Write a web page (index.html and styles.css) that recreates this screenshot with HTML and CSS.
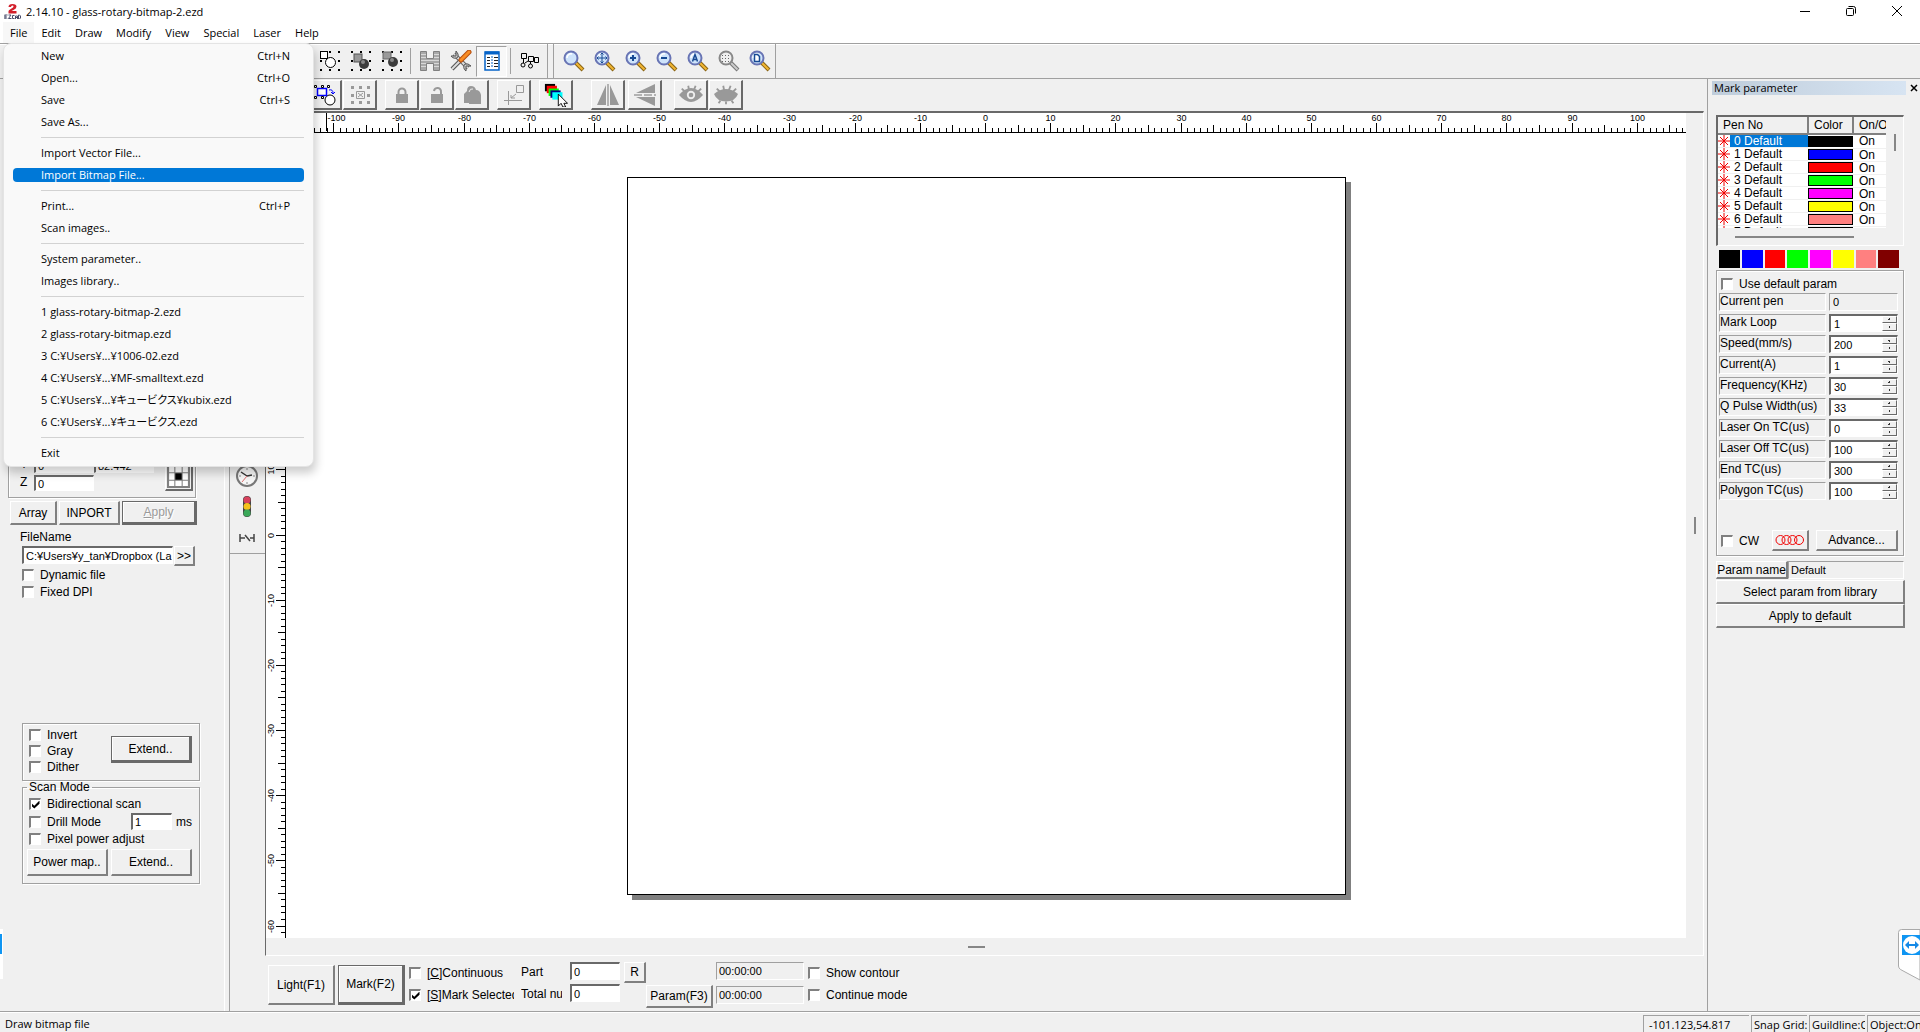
FILE: index.html
```html
<!DOCTYPE html>
<html lang="en">
<head>
<meta charset="utf-8">
<title>2.14.10 - glass-rotary-bitmap-2.ezd</title>
<link rel="stylesheet" href="styles.css">
</head>
<body>
<svg class="defs" aria-hidden="true">
  <symbol id="lens" viewBox="0 0 22 22">
    <path d="M12 12l8 8" stroke="#8a6414" stroke-width="4"/>
    <path d="M13 13l6.5 6.500" stroke="#f2b632" stroke-width="2"/>
    <circle cx="8" cy="8" r="6.500" fill="#cfe4fb" stroke="#6874b4" stroke-width="2"/>
    <path d="M4 8a4 4 0 0 1 5-4" stroke="#fff" stroke-width="1.500" fill="none"/>
  </symbol>
  <symbol id="dots" viewBox="0 0 22 22">
    <path d="M1 1h2v2h-2zM10 1h2v2h-2zM19 1h2v2h-2zM1 10h2v2h-2zM19 10h2v2h-2zM1 19h2v2h-2zM10 19h2v2h-2zM19 19h2v2h-2z"/>
  </symbol>
  <symbol id="star" viewBox="0 0 12 12">
    <path d="M6 0v12M0 6h12M2 2l8 8M10 2l-8 8" stroke="#f00000" fill="none"/>
  </symbol>
</svg>

<header class="titlebar">
  <svg class="logo" viewBox="0 0 16 16"><path d="M4 4q0-3 4-3t4 2.500q0 2-3 3.500l-2 1h5v2.500H4V8q0-1 3-2.500 2-1 2-2 0-1-1-1-1.500 0-1.500 1.500z" fill="#d3202c"/><path d="M0 12h3M0 14h2.500M0 16h3M0.500 12v4M4 12h2.500l-2.500 3.500h3M10 12.500H8v3h2M11 16v-3h2v3M11 14.500h2M14 12v4h1l1-1v-2l-1-1z" fill="none" stroke="#4a4e6c"/></svg>
  <h1>2.14.10 - glass-rotary-bitmap-2.ezd</h1>
  <div class="winbuttons">
    <button aria-label="Minimize"><svg viewBox="0 0 12 12"><path d="M1 6.500h10"/></svg></button>
    <button aria-label="Restore"><svg viewBox="0 0 12 12"><rect x="1.500" y="3.500" width="7" height="7" rx="1"/><path d="M3.500 1.500h5q2 0 2 2v5"/></svg></button>
    <button aria-label="Close"><svg viewBox="0 0 12 12"><path d="M1 1l10 10M11 1l-10 10"/></svg></button>
  </div>
</header>

<nav class="menubar">
  <button class="open">File</button><button>Edit</button><button>Draw</button><button>Modify</button><button>View</button><button>Special</button><button>Laser</button><button>Help</button>
  <div class="menu">
    <button><span>New</span><kbd>Ctrl+N</kbd></button>
    <button><span>Open...</span><kbd>Ctrl+O</kbd></button>
    <button><span>Save</span><kbd>Ctrl+S</kbd></button>
    <button><span>Save As...</span></button>
    <hr>
    <button><span>Import Vector File...</span></button>
    <button class="current"><span>Import Bitmap File...</span></button>
    <hr>
    <button><span>Print...</span><kbd>Ctrl+P</kbd></button>
    <button><span>Scan images..</span></button>
    <hr>
    <button><span>System parameter..</span></button>
    <button><span>Images library..</span></button>
    <hr>
    <button><span>1 glass-rotary-bitmap-2.ezd</span></button>
    <button><span>2 glass-rotary-bitmap.ezd</span></button>
    <button><span>3 C:¥Users¥...¥1006-02.ezd</span></button>
    <button><span>4 C:¥Users¥...¥MF-smalltext.ezd</span></button>
    <button><span>5 C:¥Users¥...¥キュービクス¥kubix.ezd</span></button>
    <button><span>6 C:¥Users¥...¥キュービクス.ezd</span></button>
    <hr>
    <button><span>Exit</span></button>
  </div>
</nav>

<div class="toolbar">
  <div class="band">
    <button aria-label="Combine"><svg viewBox="0 0 22 22"><use href="#dots"/><rect x="1.500" y="1.500" width="7" height="7" fill="#fff" stroke="#000"/><circle cx="11.500" cy="12.500" r="5" fill="#fff" stroke="#000"/></svg></button>
    <button aria-label="Group"><svg viewBox="0 0 22 22"><use href="#dots"/><rect x="4" y="4" width="8" height="8" fill="#999" stroke="#555"/><circle cx="14" cy="14" r="5" fill="#3c3c3c"/><circle cx="13" cy="12" r="2" fill="#888"/></svg></button>
    <button aria-label="Ungroup"><svg viewBox="0 0 22 22"><use href="#dots"/><rect x="2" y="2" width="8" height="7" fill="#999" stroke="#666"/><circle cx="12" cy="12" r="5" fill="#3c3c3c"/><circle cx="11" cy="10" r="2" fill="#888"/></svg></button>
    <i class="sep"></i>
    <button aria-label="Hatch"><svg viewBox="0 0 22 22"><path d="M1.500 1.500h6v7h7v-7h6v19h-6v-7h-7v7h-6z" fill="#a8a8a8" stroke="#808080"/><path d="M2 4.500h5M2 7.500h5M2 10.500h18M2 13.500h5M2 16.500h5M15 4.500h5M15 7.500h5M15 13.500h5M15 16.500h5" stroke="#d8d8d8"/></svg></button>
    <button aria-label="System settings"><svg viewBox="0 0 22 22"><path d="M4 4L18 18" stroke="#666" stroke-width="4"/><path d="M4 4L18 18" stroke="#ddd" stroke-width="2"/><path d="M6 1v5h-5a4.500 4.500 0 0 0 7 1q1-3-2-6zM21 16h-5v5a4.500 4.500 0 0 1-1-7q3-1 6 2z" fill="#ccc" stroke="#555"/><path d="M2 19l8-8" stroke="#555" stroke-width="4"/><path d="M2 19l8-8" stroke="#ddd" stroke-width="2"/><path d="M11 10l8-8" stroke="#b54d0e" stroke-width="5" stroke-linecap="round"/><path d="M11 10l8-8" stroke="#f98d24" stroke-width="3" stroke-linecap="round"/></svg></button>
    <button class="pressed" aria-label="Object list"><svg viewBox="0 0 22 22"><rect x="4" y="2" width="14" height="18" fill="#fff" stroke="#0563c8" stroke-width="1.500"/><path d="M4 3h14" stroke="#0563c8" stroke-width="3"/><path d="M6 7.500h3M6 10.500h3M6 13.500h3M6 16.500h3M13 7.500h4M13 10.500h4M13 13.500h4M13 16.500h4" stroke="#222"/><path d="M11 6v12" stroke="#0563c8" stroke-dasharray="2 1"/></svg></button>
    <i class="sep"></i>
    <button aria-label="Node edit"><svg viewBox="0 0 22 22" fill="none" stroke="#000"><path d="M2.500 3.500h5v5h-5zM9.500 6.500h5v5h-5zM15.500 7.500h4v5h-4zM4.500 9v4M11.500 12v2"/><circle cx="4" cy="15" r="2"/><circle cx="11.500" cy="16" r="2"/><path d="M6 13l3-2"/></svg></button>
  </div>
  <div class="band zooms">
    <button aria-label="Zoom window"><svg viewBox="0 0 22 22"><use href="#lens"/></svg></button>
    <button aria-label="Pan"><svg viewBox="0 0 22 22"><use href="#lens"/><path d="M8 3v10M3 8h10M6.500 4.500l1.500-1.500 1.500 1.500M6.500 11.500l1.500 1.500 1.500-1.500M4.500 6.500l-1.500 1.500 1.500 1.500M11.500 6.500l1.500 1.500-1.500 1.500" stroke="#174a94" fill="none"/></svg></button>
    <button aria-label="Zoom in"><svg viewBox="0 0 22 22"><use href="#lens"/><path d="M8 5v6M5 8h6" stroke="#174a94" stroke-width="2"/></svg></button>
    <button aria-label="Zoom out"><svg viewBox="0 0 22 22"><use href="#lens"/><path d="M5 8h6" stroke="#174a94" stroke-width="2"/></svg></button>
    <button aria-label="Zoom all"><svg viewBox="0 0 22 22"><use href="#lens"/><path d="M5.500 11.500l2.500-7 2.500 7M6 9.500h4" stroke="#174a94" stroke-width="1.500" fill="none"/></svg></button>
    <button aria-label="Zoom selected"><svg viewBox="0 0 22 22"><path d="M12 12l8 8" stroke="#777" stroke-width="4"/><path d="M13 13l6.500 6.500" stroke="#ccc" stroke-width="2"/><circle cx="8" cy="8" r="6.500" fill="#eee" stroke="#888" stroke-width="2"/><path d="M4 5.500h9M4 8.500h9M4 11.500h9" stroke="#666" stroke-dasharray="1 2"/></svg></button>
    <button aria-label="Zoom page"><svg viewBox="0 0 22 22"><use href="#lens"/><path d="M5.500 4.500h3l2 2v5h-5z" fill="#fff" stroke="#174a94" stroke-width="1.500"/></svg></button>
  </div>
</div>

<main class="work">
  <div class="left-side">
    <div class="toolbar2">
      <button aria-label="Select"><svg viewBox="0 0 24 24"><circle cx="17" cy="17" r="5" fill="#fff" stroke="#000"/><path d="M4.500 5.500h9v7h-9z" fill="#fff" stroke="#00f" stroke-width="1.500"/><path d="M16 7q4-1 4 3M18 9l2 2 2-2" stroke="#00f" fill="none"/><path d="M1.500 2.500h2v2h-2zM8.500 2.500h2v2h-2zM14.500 2.500h2v2h-2zM1.500 13.500h2v2h-2zM8.500 13.500h2v2h-2z" fill="#fff" stroke="#000"/></svg></button>
      <button aria-label="Node" class="gap"><svg viewBox="0 0 24 24"><path d="M3 3h3v3h-3zM11 3h3v3h-3zM19 3h3v3h-3zM3 11h3v3h-3zM19 11h3v3h-3zM3 18h3v3h-3zM11 18h3v3h-3zM19 18h3v3h-3z" fill="#999"/><path d="M8.500 8.500h8v7h-8zM10 10l5 4M15 10l-5 4" stroke="#999" fill="none"/></svg></button>
      <button aria-label="Lock"><svg viewBox="0 0 24 24"><path d="M6 11h12v9h-12z" fill="#999"/><path d="M8.500 12v-3a3.500 3.500 0 0 1 7 0v3" fill="none" stroke="#999" stroke-width="2"/></svg></button>
      <button aria-label="Unlock"><svg viewBox="0 0 24 24"><path d="M6 11h12v9h-12z" fill="#999"/><path d="M9 8a3.500 3.500 0 0 1 7 1v3" fill="none" stroke="#999" stroke-width="2"/></svg></button>
      <button aria-label="Unlock all" class="gap"><svg viewBox="0 0 24 24"><path d="M4 20V11l3-3q0-5 4-5 4 0 5 4 4 0 5 5v9h-12v-1z" fill="#999"/><path d="M9 9q1-4 4-3" stroke="#f0f0f0" fill="none"/></svg></button>
      <button aria-label="Origin" class="gap"><svg viewBox="0 0 24 24"><path d="M14.500 2.500h7v7h-7zM6.500 8v14M2 17.500h18M14 11l-5 4M9 12v3h4" stroke="#999" fill="none"/></svg></button>
      <button aria-label="Layers" class="gap2"><svg viewBox="0 0 26 26"><path d="M1 1h11v8H1z"/><path d="M3 3h11v8H3z" fill="red"/><path d="M5 6h11v8H5z" fill="#0f0"/><path d="M7 8h11v8H7z" fill="#000080"/><path d="M9 10h11v8H9z" fill="#0ff"/><path d="M15.500 12v13l3-3 2 4h3l-2-4h4z" fill="#fff" stroke="#000"/></svg></button>
      <button aria-label="Mirror horizontal" class="gap1"><svg viewBox="0 0 24 24"><path d="M10 2v20H1zM14 2v20h9z" fill="#999"/><path d="M12 1v22" stroke="#777"/></svg></button>
      <button aria-label="Mirror vertical" class="gap3"><svg viewBox="0 0 24 24"><path d="M3 10L22 1v9zM3 14L22 23v-9z" fill="#999"/><path d="M1 12h22" stroke="#777" stroke-dasharray="8 2"/></svg></button>
      <button aria-label="Show"><svg viewBox="0 0 26 24"><path d="M0 12q13-15 26 0-13 15-26 0z" fill="#999"/><path d="M3 5l4 4M10 2l1 5M18 2l-2 5M24 5l-4 4" stroke="#999" stroke-width="2"/><circle cx="13" cy="12" r="4.500" fill="#eee"/><circle cx="13" cy="12" r="2.500" fill="#999"/></svg></button>
      <button aria-label="Hide"><svg viewBox="0 0 26 24"><path d="M0 11q13-11 26 0-3 8-13 8T0 11z" fill="#999"/><path d="M3 5l4 4M10 2l1 5M18 2l-2 5M24 5l-4 4M5 21l2-3M13 22v-3M21 21l-2-3" stroke="#999" stroke-width="2"/></svg></button>
    </div>

    <div class="mid">
      <aside class="props">
        <div class="object-list"></div>
        <div class="box pos">
          <div class="coords">
            <label for="px">X</label><input id="px" value="0"><input aria-label="Width" value="82.442">
            <label for="py">Y</label><input id="py" value="0"><input aria-label="Height" value="82.442">
            <label for="pz">Z</label><input id="pz" value="0">
          </div>
          <button class="anchor" aria-label="Anchor"><svg viewBox="0 0 22 22"><rect width="22" height="22" fill="#808080"/><path d="M2 2h5v5H2zM8 2h6v5H8zM15 2h5v5h-5zM2 8h5v6H2zM15 8h5v6h-5zM2 15h5v5H2zM8 15h6v5H8zM15 15h5v5h-5z" fill="#fff"/><path d="M8 8h6v6H8z"/></svg></button>
        </div>
        <div class="pos-actions"><button class="btn w1">Array</button><button class="btn w2">INPORT</button><button class="btn strong w3" disabled><u>A</u>pply</button></div>
        <label class="filename" for="fname">FileName</label>
        <div class="file"><input id="fname" value="C:¥Users¥y_tan¥Dropbox (La"><button class="btn">&gt;&gt;</button></div>
        <div class="checks outer">
          <label><input type="checkbox">Dynamic file</label>
          <label><input type="checkbox">Fixed DPI</label>
        </div>
        <div class="box image-opts">
          <div class="checks">
            <label><input type="checkbox">Invert</label>
            <label><input type="checkbox">Gray</label>
            <label><input type="checkbox">Dither</label>
          </div>
          <button class="btn strong wide">Extend..</button>
        </div>
        <fieldset class="box scan">
          <legend>Scan Mode</legend>
          <label><input type="checkbox" checked>Bidirectional scan</label>
          <div class="drill"><label><input type="checkbox">Drill Mode</label><input aria-label="Drill time" value="1"><span>ms</span></div>
          <label><input type="checkbox">Pixel power adjust</label>
          <div class="pair"><button class="btn wide">Power map..</button><button class="btn wide">Extend..</button></div>
        </fieldset>
      </aside>

      <section class="centre">
        <div class="draw-area">
          <div class="tools">
            <button aria-label="Timer"><svg viewBox="0 0 24 24"><circle cx="12" cy="12" r="10" fill="#f6f6f6" stroke="#777" stroke-width="2"/><path d="M12 12L6 8M12 12l5-1" stroke="#333" stroke-width="1.500"/><path d="M12 12l-5 6" stroke="#e07070"/><path d="M12 4v2M12 18v2M4 12h2M18 12h2" stroke="#888"/></svg></button>
            <button aria-label="Input port"><svg viewBox="0 0 24 24"><rect x="8" y="1" width="8" height="21" rx="4" fill="#444"/><circle cx="12" cy="5" r="3.500" fill="#d8405c"/><circle cx="12" cy="11.500" r="3.500" fill="#f6c21c"/><circle cx="12" cy="18" r="3.500" fill="#3aa858"/></svg></button>
            <button aria-label="Line"><svg viewBox="0 0 24 24"><path d="M5 8v8M19 8v8M5 12h5M10 9l5 6M15 12h4" stroke="#444" stroke-width="1.500" fill="none"/></svg></button>
          </div>
          <div class="view">
            <div class="ruler-corner"></div>
            <svg class="ruler ruler-h" id="ruler-h"></svg>
            <svg class="ruler ruler-v" id="ruler-v"></svg>
            <div class="stage"><div class="sheet"></div></div>
            <div class="vscroll"><i></i></div>
            <div class="hscroll"><i></i></div>
          </div>
        </div>
        <div class="markbar">
          <button class="btn big">Light(F1)</button><button class="btn big strong">Mark(F2)</button>
          <div class="stack modes">
            <label><input type="checkbox"><span>[<u>C</u>]Continuous</span></label>
            <label><input type="checkbox" checked><span>[<u>S</u>]Mark Selected</span></label>
          </div>
          <div class="counts">
            <label for="part">Part</label><input id="part" value="0"><button class="btn">R</button>
            <label for="total">Total num</label><input id="total" value="0">
          </div>
          <button class="btn param">Param(F3)</button>
          <div class="stack times"><input aria-label="Elapsed" readonly value="00:00:00"><input aria-label="Total time" readonly value="00:00:00"></div>
          <div class="stack">
            <label><input type="checkbox">Show contour</label>
            <label><input type="checkbox">Continue mode</label>
          </div>
        </div>
      </section>
    </div>
  </div>

  <aside class="mark">
    <div class="mark-title"><h2>Mark parameter</h2><button aria-label="Close panel"><svg viewBox="0 0 8 8"><path d="M1 1l6 6M7 1l-6 6" stroke="#000" stroke-width="1.500"/></svg></button></div>
    <div class="pens">
      <div class="pens-clip">
      <table>
        <thead><tr><th>Pen No</th><th>Color</th><th>On/Off</th></tr></thead>
        <tbody>
          <tr class="sel"><td><svg><use href="#star"/></svg><span>0 Default</span></td><td><b class="c0"></b></td><td>On</td></tr>
          <tr><td><svg><use href="#star"/></svg><span>1 Default</span></td><td><b class="c1"></b></td><td>On</td></tr>
          <tr><td><svg><use href="#star"/></svg><span>2 Default</span></td><td><b class="c2"></b></td><td>On</td></tr>
          <tr><td><svg><use href="#star"/></svg><span>3 Default</span></td><td><b class="c3"></b></td><td>On</td></tr>
          <tr><td><svg><use href="#star"/></svg><span>4 Default</span></td><td><b class="c4"></b></td><td>On</td></tr>
          <tr><td><svg><use href="#star"/></svg><span>5 Default</span></td><td><b class="c5"></b></td><td>On</td></tr>
          <tr><td><svg><use href="#star"/></svg><span>6 Default</span></td><td><b class="c6"></b></td><td>On</td></tr>
          <tr><td><svg><use href="#star"/></svg><span>7 Default</span></td><td><b class="c7"></b></td><td>On</td></tr>
        </tbody>
      </table>
      </div>
      <div class="pens-v"><i></i></div>
      <div class="pens-h"><i></i></div>
    </div>
    <div class="palette"><b class="c0"></b><b class="c1"></b><b class="c2"></b><b class="c3"></b><b class="c4"></b><b class="c5"></b><b class="c6"></b><b class="c7"></b></div>
    <div class="box params">
      <label class="default"><input type="checkbox">Use default param</label>
      <div class="row"><label for="m0">Current pen</label><div class="num"><input id="m0" readonly value="0"></div></div>
      <div class="row"><label for="m1">Mark Loop</label><div class="num"><input id="m1" value="1"><span class="spin"><button aria-label="Up"></button><button aria-label="Down"></button></span></div></div>
      <div class="row"><label for="m2">Speed(mm/s)</label><div class="num"><input id="m2" value="200"><span class="spin"><button aria-label="Up"></button><button aria-label="Down"></button></span></div></div>
      <div class="row"><label for="m3">Current(A)</label><div class="num"><input id="m3" value="1"><span class="spin"><button aria-label="Up"></button><button aria-label="Down"></button></span></div></div>
      <div class="row"><label for="m4">Frequency(KHz)</label><div class="num"><input id="m4" value="30"><span class="spin"><button aria-label="Up"></button><button aria-label="Down"></button></span></div></div>
      <div class="row"><label for="m5">Q Pulse Width(us)</label><div class="num"><input id="m5" value="33"><span class="spin"><button aria-label="Up"></button><button aria-label="Down"></button></span></div></div>
      <div class="row"><label for="m6">Laser On TC(us)</label><div class="num"><input id="m6" value="0"><span class="spin"><button aria-label="Up"></button><button aria-label="Down"></button></span></div></div>
      <div class="row"><label for="m7">Laser Off TC(us)</label><div class="num"><input id="m7" value="100"><span class="spin"><button aria-label="Up"></button><button aria-label="Down"></button></span></div></div>
      <div class="row"><label for="m8">End TC(us)</label><div class="num"><input id="m8" value="300"><span class="spin"><button aria-label="Up"></button><button aria-label="Down"></button></span></div></div>
      <div class="row"><label for="m9">Polygon TC(us)</label><div class="num"><input id="m9" value="100"><span class="spin"><button aria-label="Up"></button><button aria-label="Down"></button></span></div></div>
      <div class="cw"><label><input type="checkbox">CW</label><button class="btn wobble" aria-label="Wobble"><svg viewBox="0 0 30 12" fill="none" stroke="#f00000"><circle cx="5.500" cy="6" r="4.500"/><circle cx="11.500" cy="6" r="4.500"/><circle cx="17.500" cy="6" r="4.500"/><circle cx="24" cy="6" r="4.500"/></svg></button><button class="btn adv">Advance...</button></div>
    </div>
    <div class="pname"><button class="btn">Param name</button><input aria-label="Param name" readonly value="Default"></div>
    <button class="btn full">Select param from library</button>
    <button class="btn full">Apply to <u>d</u>efault</button>
  </aside>
</main>

<footer class="status">
  <p>Draw bitmap file</p>
  <span class="xy">-101.123,54.817</span><span>Snap Grid:</span><span>Guildline:O</span><span>Object:On</span>
</footer>

<div class="edge-left"><i></i></div>
<div class="edge-right"><svg viewBox="0 0 22 52"><path d="M22 0.500H3.500q-3 0-3 3V37q0 2 2 3.500L22 51z" fill="#fff" stroke="#a9a9a9"/><path d="M4 6h18v20H4z" fill="#0f95f2"/><circle cx="14" cy="16" r="9" fill="#fff"/><path d="M7 16l4-4v3h6v-3l4 4-4 4v-3h-6v3z" fill="#1689e6"/></svg></div>
<script src="script.js"></script>
</body>
</html>
```
FILE: styles.css
```css
:root {
  --face: #f0f0f0;
  --line: #a0a0a0;
  --dark: #696969;
  --ui: "Liberation Sans", "Noto Sans CJK JP", sans-serif;
  --shell: "Open Sans", "Noto Sans CJK JP", sans-serif;
}
* { box-sizing: border-box; }
body {
  margin: 0;
  min-height: 100vh;
  display: flex;
  flex-direction: column;
  overflow: hidden;
  background: var(--face);
  color: #000;
  font: 12px/14px var(--ui);
}
button, input { font: inherit; color: inherit; }
button { margin: 0; padding: 0; border: 0; background: none; white-space: nowrap; }
h1, h2, p { margin: 0; font: inherit; }
svg { display: block; }
label { white-space: nowrap; }
.defs { position: absolute; width: 0; height: 0; }

/* title and menus */
.titlebar { display: flex; align-items: center; height: 22px; background: #fff; padding-left: 4px; font: 11px/16px var(--shell); }
.titlebar h1 { padding-top: 2px; }
.logo { width: 17px; height: 16px; margin-right: 5px; }
.winbuttons { display: flex; margin-left: auto; }
.winbuttons button { width: 46px; display: grid; place-items: center; }
.winbuttons svg { width: 12px; height: 12px; fill: none; stroke: #000; }
.menubar { position: relative; z-index: 5; display: flex; height: 21px; padding-left: 3px; background: #fff; font: 11px/21px var(--shell); }
.menubar > button { padding: 0 7px; }
.menubar > .open { background: #f7f7f7; }
.menu {
  position: absolute;
  left: 3px;
  top: 21px;
  width: 311px;
  padding: 1px 9px 2px;
  background: #f9f9f9;
  border: 1px solid #e4e4e4;
  border-radius: 8px;
  box-shadow: 2px 6px 10px rgba(0, 0, 0, .2);
}
.menu button { display: flex; align-items: center; width: 100%; height: 22px; padding: 0; font-feature-settings: "palt"; }
.menu button > span { flex: 1; padding-left: 28px; text-align: left; line-height: 14px; border-radius: 4px; }
.menu kbd { padding-right: 14px; font: inherit; line-height: 14px; }
.menu .current > span { background: #0078d7; color: #fff; }
.menu hr { height: 1px; margin: 4px 0 4px 28px; border: 0; background: #d2d2d2; }

/* toolbars */
.toolbar { display: flex; height: 36px; padding-left: 312px; border-top: 1px solid var(--line); border-bottom: 1px solid var(--line); box-shadow: inset 0 1px #fff; }
.band { display: flex; align-items: center; padding: 0 2px; margin-right: 5px; border-right: 1px solid var(--line); }
.band button { width: 31px; height: 31px; display: grid; place-items: center; }
.band svg { width: 22px; height: 22px; }
.band .pressed { background: #f8f8f8; border: 1px solid var(--line); border-right-color: #fff; border-bottom-color: #fff; }
.sep { width: 1px; height: 26px; margin: 0 3px; background: var(--line); }
.zooms { border-left: 1px solid var(--line); padding: 0 0 0 4px; }
.work { flex: 1; display: flex; }
.left-side { flex: 1; display: flex; flex-direction: column; min-width: 0; }
.toolbar2 { display: flex; height: 32px; padding: 1px 0 1px 308px; }
.toolbar2 button { width: 34px; height: 30px; margin-right: 1px; display: grid; place-items: center; border: 1px solid #fff; border-right: 2px solid var(--dark); border-bottom: 2px solid var(--dark); }
.toolbar2 svg { width: 24px; height: 24px; }
.toolbar2 .gap { margin-right: 8px; }
.toolbar2 .gap1 { margin-right: 3px; }
.toolbar2 .gap2 { margin-right: 18px; }
.toolbar2 .gap3 { margin-right: 12px; }

/* shared classic controls */
.btn {
  border: 1px solid #fff;
  border-right: 2px solid #808080;
  border-bottom: 2px solid #808080;
  background: var(--face);
}
.btn.strong { border: 1px solid var(--dark); border-right: 3px solid var(--dark); border-bottom: 3px solid var(--dark); box-shadow: inset 1px 1px #fff; }
.btn:disabled { color: #9a9a9a; text-shadow: 1px 1px #fff; }
input:not([type="checkbox"]) {
  min-width: 0;
  padding: 0 0 0 2px;
  border: 1px solid #fff;
  border-top: 2px solid var(--dark);
  border-left: 2px solid var(--dark);
  border-radius: 0;
  background: #fff;
  font-size: 11px;
}
input[type="checkbox"] {
  appearance: none;
  flex: none;
  display: grid;
  place-items: center;
  width: 12px;
  height: 12px;
  margin: 0;
  border: 1px solid #fff;
  border-top: 2px solid #808080;
  border-left: 2px solid #808080;
  background: #fff;
}
input[type="checkbox"]:checked::before {
  content: "";
  width: 8px;
  height: 8px;
  background: #000;
  clip-path: polygon(0 35%, 35% 65%, 100% 0, 100% 40%, 35% 100%, 0 70%);
}
.box { border: 1px solid var(--line); box-shadow: 1px 1px #fff, inset 1px 1px #fff; }

/* property column */
.mid { flex: 1; display: flex; }
.props { width: 230px; border-right: 1px solid var(--line); box-shadow: inset -4px 0 var(--face), inset -5px 0 #fff; }
.object-list { height: 309px; margin: 0 8px; }
.pos { display: flex; width: 188px; height: 78px; margin-left: 8px; padding: 18px 0 0 11px; }
.coords { display: grid; grid-template-columns: 14px 60px 60px; grid-auto-rows: 16px; gap: 2px 0; align-content: start; }
.anchor { align-self: end; width: 28px; height: 28px; margin: 0 0 6px 11px; padding: 1px; border: 1px solid #fff; border-right: 2px solid var(--dark); border-bottom: 2px solid var(--dark); }
.pos-actions { display: flex; gap: 2px; height: 24px; margin: 3px 0 5px 10px; }
.w1 { width: 47px; } .w2 { width: 61px; } .w3 { width: 75px; }
.filename { display: block; margin-left: 20px; }
.file { display: flex; height: 20px; margin: 2px 0 2px 22px; gap: 1px; }
.file input { width: 151px; height: 18px; }
.file .btn { width: 21px; }
.checks label, .scan > label, .drill label, .stack label, .default, .cw label { display: flex; align-items: center; gap: 6px; }
.outer { display: grid; gap: 3px; margin-left: 22px; }
.image-opts { display: flex; justify-content: space-between; width: 178px; height: 58px; margin: 124px 0 0 22px; padding: 4px 7px 0 6px; }
.image-opts .checks { display: grid; gap: 2px; align-content: start; }
.image-opts .btn { margin-top: 8px; }
.wide { width: 81px; height: 27px; }
.scan { width: 178px; min-width: 0; height: 104px; margin: -1px 0 0 22px; padding: 3px 7px 0 4px; }
.scan legend { padding: 0 2px; line-height: 14px; }
.scan > label { margin-left: 2px; }
.drill { display: flex; align-items: center; margin: 2px 0 2px 2px; }
.drill input:not([type="checkbox"]) { width: 41px; height: 17px; margin: 0 4px 0 auto; }
.pair { display: flex; gap: 3px; margin-top: 3px; }

/* centre column */
.centre { flex: 1; min-width: 0; display: flex; flex-direction: column; }
.draw-area { flex: 1; display: flex; }
.tools { align-self: start; width: 35px; height: 443px; padding: 350px 0 0 5px; border-bottom: 1px solid var(--line); display: grid; grid-auto-rows: 31px; }
.tools button { width: 24px; height: 30px; display: grid; place-items: center; }
.tools svg { width: 24px; height: 24px; }
.view {
  flex: 1;
  display: grid;
  grid-template: 20px 1fr 17px / 20px 1fr 17px;
  margin-right: 3px;
  border-left: 1px solid var(--dark);
  border-top: 2px solid var(--dark);
  border-right: 1px solid #fff;
  border-bottom: 1px solid #fff;
}
.ruler-corner { background: #fff; border-bottom: 1px solid #000; }
.ruler { width: 100%; height: 100%; background: #fff; overflow: hidden; font-size: 9px; }
.ruler-v { grid-area: 2 / 1; }
.ruler path { stroke: #000; shape-rendering: crispEdges; fill: none; }
.stage { grid-area: 2 / 2; display: grid; place-items: center; background: #fff; }
.sheet { width: 719px; height: 718px; border: 1px solid #000; box-shadow: 5px 5px #808080; background: #fff; }
.vscroll { grid-area: 1 / 3 / 3; display: grid; place-items: center; }
.vscroll i { width: 2px; height: 17px; background: #868686; }
.hscroll { grid-area: 3 / 1 / 4 / 3; display: grid; place-items: center; }
.hscroll i { width: 17px; height: 2px; background: #868686; }

.markbar { display: flex; height: 55px; padding: 6px 0 0 38px; }
.big { width: 67px; height: 40px; margin: 3px 3px 0 0; }
.stack { display: grid; grid-auto-rows: 22px; align-content: start; }
.modes { width: 105px; margin: 0 7px 0 1px; overflow: hidden; }
.counts { display: grid; grid-template-columns: 45px 50px 22px; grid-auto-rows: 18px; gap: 4px; align-content: start; }
.counts label { width: 41px; overflow: hidden; line-height: 20px; }
.counts .btn { height: 21px; }
.param { width: 67px; height: 23px; margin: 23px 3px 0 0; }
.times { width: 88px; margin-right: 4px; grid-auto-rows: 18px; gap: 6px; }
input:not([type="checkbox"])[readonly] { border: 1px solid #fff; border-top-color: var(--line); border-left-color: var(--line); background: var(--face); }

/* mark parameters */
.mark { width: 213px; flex: none; border-left: 1px solid var(--line); padding: 2px 0 0 4px; }
.mark-title { display: flex; align-items: center; gap: 4px; height: 14px; font: 11px/14px var(--shell); }
.mark-title h2 { width: 194px; padding-left: 2px; background: linear-gradient(90deg, #bfcddb, #d7e4f2); }
.mark-title button { width: 8px; height: 8px; }
.pens { display: grid; grid-template: 111px 17px / 168px 17px; width: 188px; margin: 20px 0 0 4px; border: 1px solid #fff; border-top: 2px solid var(--dark); border-left: 2px solid var(--dark); }
.pens-clip { overflow: hidden; background: #fff; }
.pens table { width: 178px; table-layout: fixed; border-collapse: collapse; }
.pens th { height: 17px; padding: 0 0 0 5px; font-weight: normal; text-align: left; background: var(--face); border-right: 2px solid #808080; border-bottom: 2px solid #808080; }
.pens th:nth-child(1) { width: 90px; } .pens th:nth-child(2) { width: 45px; }
.pens td { height: 13px; padding: 0; line-height: 12px; border-bottom: 1px solid #f0f0f0; }
.pens td:first-child { display: flex; }
.pens td svg { width: 12px; height: 12px; }
.pens td span { flex: 1; padding-left: 4px; line-height: 12px; }
.pens td b { display: block; height: 11px; border: 1px solid #000; }
.pens td:last-child { padding-left: 6px; }
.sel span { background: #0078d7; color: #fff; }
.pens-v { padding: 17px 0 0 8px; }
.pens-v i { display: block; width: 2px; height: 17px; background: #868686; }
.pens-h { padding: 8px 0 0 17px; }
.pens-h i { display: block; width: 119px; height: 2px; background: #868686; }
.palette { display: grid; grid-template-columns: repeat(8, 1fr); gap: 2px; width: 180px; height: 18px; margin: 4px 0 2px 7px; }
.c0 { background: #000; } .c1 { background: #00f; } .c2 { background: #f00; } .c3 { background: #0f0; }
.c4 { background: #f0f; } .c5 { background: #ff0; } .c6 { background: #ff8080; } .c7 { background: #800000; }
.params { width: 188px; height: 286px; margin-left: 4px; padding: 6px 5px 0 2px; display: flex; flex-direction: column; }
.default { margin: 0 0 2px 2px; }
.row { display: flex; justify-content: space-between; height: 18px; margin-bottom: 3px; }
.row label { width: 107px; line-height: 15px; border: 1px solid #fff; border-top-color: var(--line); border-left-color: var(--line); }
.num { position: relative; display: flex; width: 69px; }
.num input { width: 100%; padding-left: 3px; }
.spin { position: absolute; right: 1px; top: 2px; display: grid; grid-template-rows: 7px 8px; width: 15px; }
.spin button { background: radial-gradient(circle, #333 1px, transparent 1px) var(--face); border: 1px solid #fff; border-right-color: var(--dark); border-bottom-color: var(--dark); }
.cw { display: flex; align-items: center; margin: auto 0 4px 2px; }
.wobble { width: 37px; height: 21px; margin-left: auto; padding-left: 2px; }
.wobble svg { width: 30px; height: 12px; }
.adv { width: 82px; height: 21px; margin-left: 7px; }
.pname { display: flex; width: 188px; height: 18px; margin: 5px 0 1px 4px; }
.pname .btn { width: 72px; } .pname input { flex: 1; }
.full { display: block; width: 189px; height: 24px; margin-left: 4px; }

/* status bar */
.status { display: flex; gap: 2px; height: 21px; padding-top: 3px; border-top: 1px solid var(--line); box-shadow: inset 0 1px #fff; font: 11px/18px var(--shell); }
.status p { flex: 1; padding-left: 5px; }
.status span { width: 56px; padding-left: 2px; overflow: hidden; white-space: nowrap; border-left: 1px solid var(--line); border-top: 1px solid var(--line); }
.status .xy { width: 106px; padding-left: 5px; }
.status span:last-child { width: 53px; }

/* remote-session tabs docked over the window edges */
.edge-left { position: absolute; left: 0; top: 929px; width: 3px; height: 50px; padding-top: 5px; background: #fff; }
.edge-left i { display: block; width: 2px; height: 20px; background: #0f95f2; }
.edge-right { position: absolute; right: 0; top: 929px; width: 22px; height: 52px; }
```
FILE: script.js
```js
// Draws the millimetre rulers with zero at the middle of the stage.
const SCALE = 6.517;
const depth = v => (v % 10 === 0 ? 10 : v % 5 === 0 ? 8 : 5);

function drawRuler(svg, vertical) {
  const length = vertical ? svg.clientHeight : svg.clientWidth;
  const zero = length / 2;
  const reach = Math.floor(zero / SCALE);
  let path = vertical ? `M19.5 0V${length}` : `M0 19.5H${length}`;
  let labels = "";
  for (let v = -reach; v <= reach; v++) {
    const p = Math.round(vertical ? zero - v * SCALE : zero + v * SCALE) - 0.5;
    const d = depth(v);
    path += vertical ? `M${20 - d} ${p}h${d}` : `M${p} ${20 - d}v${d}`;
    if (v % 10 === 0) {
      labels += vertical
        ? `<text transform="translate(8 ${p}) rotate(-90)" text-anchor="middle">${v}</text>`
        : `<text x="${v === -100 ? p + 3 : p}" y="8" text-anchor="middle">${v}</text>`;
    }
  }
  if (!vertical) path += "M40.5 0V18";
  svg.innerHTML = `<path d="${path}"/>${labels}`;
}

function drawRulers() {
  drawRuler(document.getElementById("ruler-h"), false);
  drawRuler(document.getElementById("ruler-v"), true);
}
drawRulers();
addEventListener("resize", drawRulers);
```
